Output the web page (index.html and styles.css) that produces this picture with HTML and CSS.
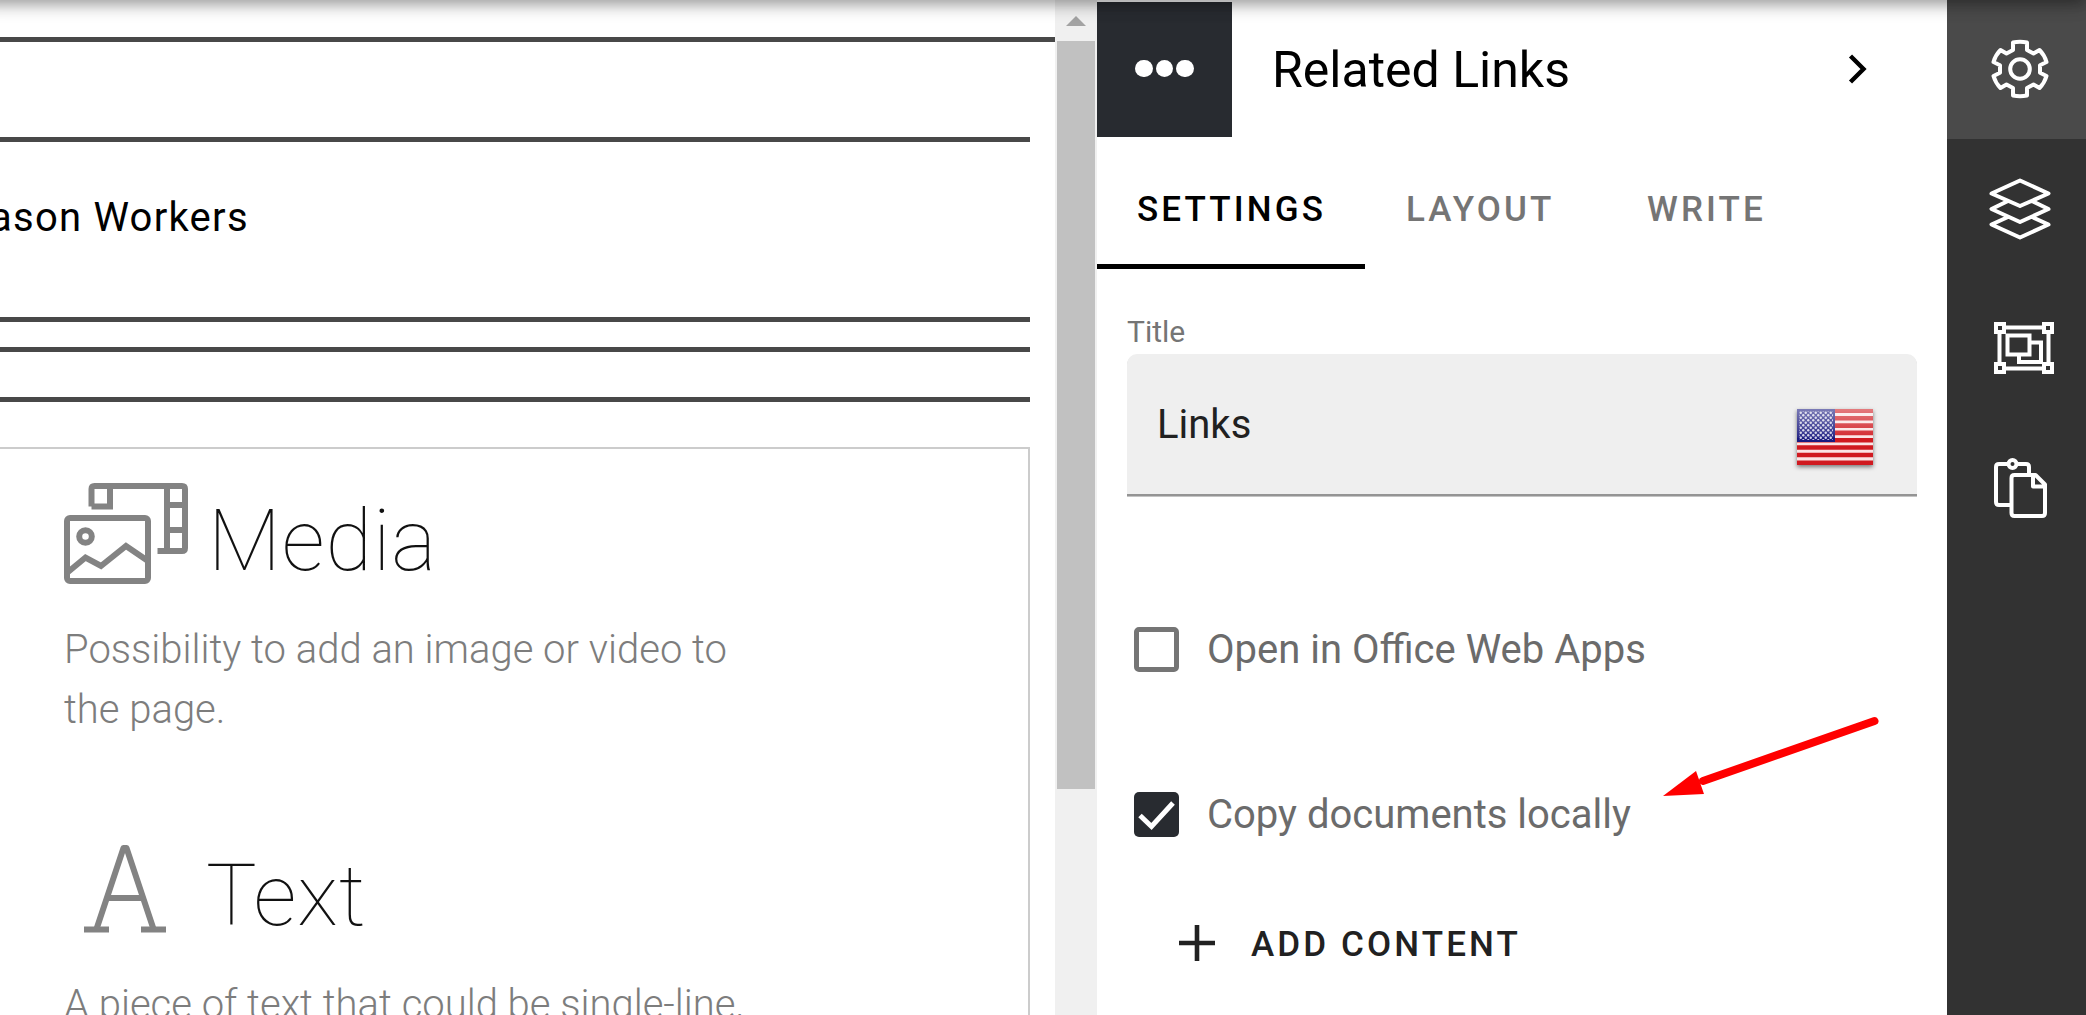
FILE: index.html
```html
<!DOCTYPE html>
<html lang="en">
<head>
<meta charset="utf-8">
<title>Related Links</title>
<link rel="stylesheet" href="styles.css">
</head>
<body>
<div class="app">
  <main class="canvas">
    <div class="band band-top"></div>
    <div class="band band-empty"></div>
    <div class="band band-title"><span class="page-title">ason Workers</span></div>
    <div class="band band-gap"></div>
    <div class="band band-row"></div>
    <section class="chooser">
      <article class="option option-media">
        <header class="option-head">
          <svg class="icon-media" width="126" height="102" viewBox="0 0 126 102" fill="none" stroke="#838383" stroke-width="6">
            <rect x="3" y="35" width="81" height="63" rx="3"/>
            <circle cx="21.5" cy="53.500" r="6.300"/>
            <path d="M4 89l17.500-14.500 15.500 8.500 25-20 22 15"/>
            <path d="M27.500 23.500V6q0-3 3-3H118q3 0 3 3v59q0 3-3 3H93.500M27.500 23.500H46V4M103 4v64M103 22h18M103 47h18"/>
          </svg>
          <h2>Media</h2>
        </header>
        <p>Possibility to add an image or video to<br>the page.</p>
      </article>
      <article class="option option-text">
        <header class="option-head">
          <svg class="icon-text" width="82" height="88" viewBox="0 0 82 88" fill="none" stroke="#838383" stroke-width="6">
            <path d="M12.500 84L39.500 3h3L69.500 84M21 53h40" stroke-linejoin="round"/>
            <path d="M0 84.500h25M57 84.500h25"/>
          </svg>
          <h2>Text</h2>
        </header>
        <p>A piece of text that could be single-line,</p>
      </article>
    </section>
  </main>
  <div class="scrollbar">
    <svg width="42" height="41" viewBox="0 0 42 41"><path d="M11 26h20L21 16z" fill="#a3a3a3"/></svg>
    <div class="thumb"></div>
  </div>
  <aside class="panel">
    <header class="panel-head">
      <button class="more"><i></i><i></i><i></i></button>
      <h1>Related Links</h1>
      <svg class="chevron" width="20" height="32" viewBox="0 0 20 32" fill="none" stroke="#000" stroke-width="4.400"><path d="M2.500 3L15.500 16 2.500 29"/></svg>
    </header>
    <nav class="tabs">
      <a class="tab active">SETTINGS</a>
      <a class="tab">LAYOUT</a>
      <a class="tab">WRITE</a>
    </nav>
    <div class="form">
      <label class="caption">Title</label>
      <div class="field">
        <span>Links</span>
        <svg class="flag" width="76" height="56" viewBox="0 0 76 56">
          <defs>
            <linearGradient id="gloss" x2="0" y2="1"><stop offset="0" stop-color="#fff" stop-opacity=".42"/><stop offset=".5" stop-color="#fff" stop-opacity=".08"/><stop offset=".52" stop-color="#fff" stop-opacity="0"/></linearGradient>
            <pattern id="stars" width="5" height="5" patternUnits="userSpaceOnUse"><circle cx="1.250" cy="1.250" r="1.200" fill="#fff"/><circle cx="3.750" cy="3.750" r="1.200" fill="#fff"/></pattern>
          </defs>
          <path fill="#fbe4e4" d="M0 0h76v56H0z"/>
          <path d="M0 1.750h76M0 9.300h76M0 16.600h76M0 23.900h76M0 31.200h76M0 38.500h76M0 46h76M0 53.700h76" stroke="#d01a20" stroke-width="4.600"/>
          <path fill="#1a1a80" d="M0 0h38v33H0z"/>
          <path fill="url(#stars)" opacity=".8" d="M2 2h34v29H2z"/>
          <path fill="url(#gloss)" d="M0 0h76v56H0z"/>
        </svg>
      </div>
      <div class="check"><span class="box"></span><span class="check-label">Open in Office Web Apps</span></div>
      <div class="check second"><span class="box checked"><svg width="45" height="45" viewBox="0 0 45 45" fill="none" stroke="#fff" stroke-width="5"><path d="M6 23.500l11.500 11L39 11"/></svg></span><span class="check-label">Copy documents locally</span></div>
      <button class="add"><svg width="36" height="36" viewBox="0 0 36 36" stroke="#212121" stroke-width="4.600"><path d="M18 0v36M0 18h36"/></svg><span>ADD CONTENT</span></button>
    </div>
  </aside>
  <nav class="rail">
    <a class="rail-item current">
      <svg width="60" height="60" viewBox="-30 -30 60 60" fill="none" stroke="#fff" stroke-width="4" stroke-linejoin="round">
        <circle r="9.800"/>
        <path d="M-7-26.500Q0-28 7-26.500V-19L13.500-15.500 19.500-19Q24.500-14 26.500-7L20-3.700V3.700L26.500 7Q24.500 14 19.500 19L13.500 15.500 7 19V26.500Q0 28-7 26.500V19L-13.500 15.500-19.500 19Q-24.500 14-26.500 7L-20 3.700V-3.700L-26.500-7Q-24.500-14-19.500-19L-13.500-15.500-7-19Z"/>
      </svg>
    </a>
    <a class="rail-item">
      <svg width="62" height="62" viewBox="-31 -31 62 62" fill="none" stroke="#fff" stroke-width="4" stroke-linejoin="round">
        <path d="M0-28.500L28.500-15.500 0-3-28.500-15.500ZM-12-8L-28.500 0 0 13 28.500 0 12-8M-12 8L-28.500 15.500 0 28.500 28.500 15.500 12 8"/>
      </svg>
    </a>
    <a class="rail-item wide">
      <svg width="62" height="54" viewBox="0 0 62 54" fill="none" stroke="#fff" stroke-width="4">
        <path d="M11 6.500H50M11 47.500H50M6.500 11V42M55.500 11V42"/>
        <path d="M3 3h8v8H3zM51 3h8v8h-8zM3 43h8v8H3zM51 43h8v8h-8zM14.500 14.500h22v19h-22zM37 21.500H48V41H26V34"/>
      </svg>
    </a>
    <a class="rail-item low">
      <svg width="56" height="62" viewBox="0 0 56 62" fill="none" stroke="#fff" stroke-width="4" stroke-linejoin="round">
        <circle cx="20.500" cy="7" r="4"/>
        <path d="M16 7H7q-3 0-3 3V45q0 3 3 3H18M25 7h9q3 0 3 3V17"/>
        <path d="M22.500 18H43.500L53 27.500V56q0 3-3 3H22.500q-3 0-3-3V21q0-3 3-3ZM41 18V29.500H53"/>
      </svg>
    </a>
  </nav>
</div>
<div class="topbar-shadow"></div>
<svg class="arrow" width="230" height="90" viewBox="0 0 230 90"><path d="M219.500 11L48 71" stroke="#f00" stroke-width="8" stroke-linecap="round"/><path d="M8 86L41 61 49 84z" fill="#f00"/></svg>
</body>
</html>
```
FILE: styles.css
```css
* { box-sizing: border-box; }
body { margin: 0; width: 2086px; height: 1015px; overflow: hidden; position: relative; background: #fff; font-family: Roboto, sans-serif; }
h1, h2, p { margin: 0; }
button { border: 0; background: none; padding: 0; font: inherit; }
svg { display: block; flex: none; }
.app { display: flex; height: 1015px; }

.canvas { width: 1055px; overflow: hidden; }
.band { width: 1030px; border-bottom: 5px solid #484848; }
.band-top { width: 1055px; height: 42px; }
.band-empty { height: 100px; }
.band-title { height: 180px; padding-top: 46px; }
.band-gap { height: 30px; }
.band-row { height: 50px; }
.page-title { display: block; margin-left: -10px; font-size: 40px; line-height: 60px; letter-spacing: 1.250px; color: #000; }
.chooser { width: 1030px; height: 700px; margin-top: 45px; border: solid #ccc; border-width: 2px 2px 0 0; }
.option { padding-left: 64px; }
.option-head { display: flex; height: 100px; }
.option h2 { font-size: 85px; line-height: 100px; font-weight: 100; letter-spacing: .9px; color: #111; }
.option p { font-size: 40px; line-height: 60px; font-weight: 300; color: #7d7d7d; white-space: nowrap; }
.option-media { padding-top: 34px; }
.option-media h2 { margin: 8px 0 0 18px; }
.option-media p { margin-top: 37px; }
.option-text { padding-top: 105px; }
.option-text .icon-text { margin-left: 20px; }
.option-text h2 { margin: 1px 0 0 40px; }
.option-text p { margin-top: 30px; }

.scrollbar { width: 42px; background: #f0f0f0; }
.thumb { height: 748px; margin: 0 2px; background: #c1c1c1; }

.panel { width: 850px; background: #fff; }
.panel-head { display: flex; align-items: center; height: 137px; padding-top: 2px; }
.more { width: 135px; height: 135px; padding-bottom: 2px; background: #282b30; display: flex; align-items: center; justify-content: center; gap: 3px; }
.more i { width: 17.500px; height: 17.500px; border-radius: 50%; background: #fff; }
h1 { margin-left: 40px; width: 576px; font-size: 50px; line-height: 60px; font-weight: 400; color: #000; }
.chevron { margin-bottom: 2px; }
.tabs { display: flex; height: 132px; }
.tab { padding: 47px 40px 0; height: 132px; font-size: 35px; line-height: 52px; font-weight: 500; letter-spacing: 3.120px; color: #757575; }
.tab.active { width: 268px; color: #000; border-bottom: 5px solid #000; }
.tab + .tab { width: 241px; padding-left: 41px; }
.form { padding: 43px 30px 0; }
.caption { display: block; height: 42px; font-size: 30px; line-height: 40px; color: #757575; }
.field { display: flex; justify-content: space-between; height: 142px; padding: 0 44px 0 30px; border-bottom: 2px solid #949494; box-shadow: 0 1px #c4c4c4; border-radius: 10px 10px 0 0; background: #efefef; font-size: 40px; line-height: 142px; color: #212121; }
.flag { margin-top: 55px; filter: drop-shadow(0 2px 2px rgba(0,0,0,.5)); }
.check { display: flex; align-items: center; gap: 28px; height: 60px; margin: 123px 0 0 7px; font-size: 40px; line-height: 60px; color: #6b6b6b; }
.check.second { margin-top: 105px; }
.check-label { padding-top: 1px; }
.box { width: 45px; height: 45px; border: 5px solid #757575; border-radius: 5px; }
.box.checked { border: 0; background: #282b30; }
.add { display: flex; align-items: center; gap: 36px; height: 60px; margin: 69px 0 0 52px; font-size: 35px; font-weight: 500; letter-spacing: 3.120px; color: #212121; }
.add span { padding-top: 2px; }

.rail { width: 139px; background: #323232; }
.rail-item { display: flex; align-items: center; justify-content: center; height: 139px; padding-left: 6px; }
.rail-item.current { padding-bottom: 2px; background: #4a4a4a; }
.rail-item.wide { padding: 1px 0 0 15px; }
.rail-item.low { padding-top: 3px; }

.topbar-shadow { position: absolute; top: -61px; left: -20px; right: 0; height: 60px; box-shadow: 0 5px 10px -2.500px rgba(0,0,0,.2), 0 10px 12.500px rgba(0,0,0,.14), 0 2.500px 25px rgba(0,0,0,.12); }
.arrow { position: absolute; left: 1655px; top: 710px; }
```
